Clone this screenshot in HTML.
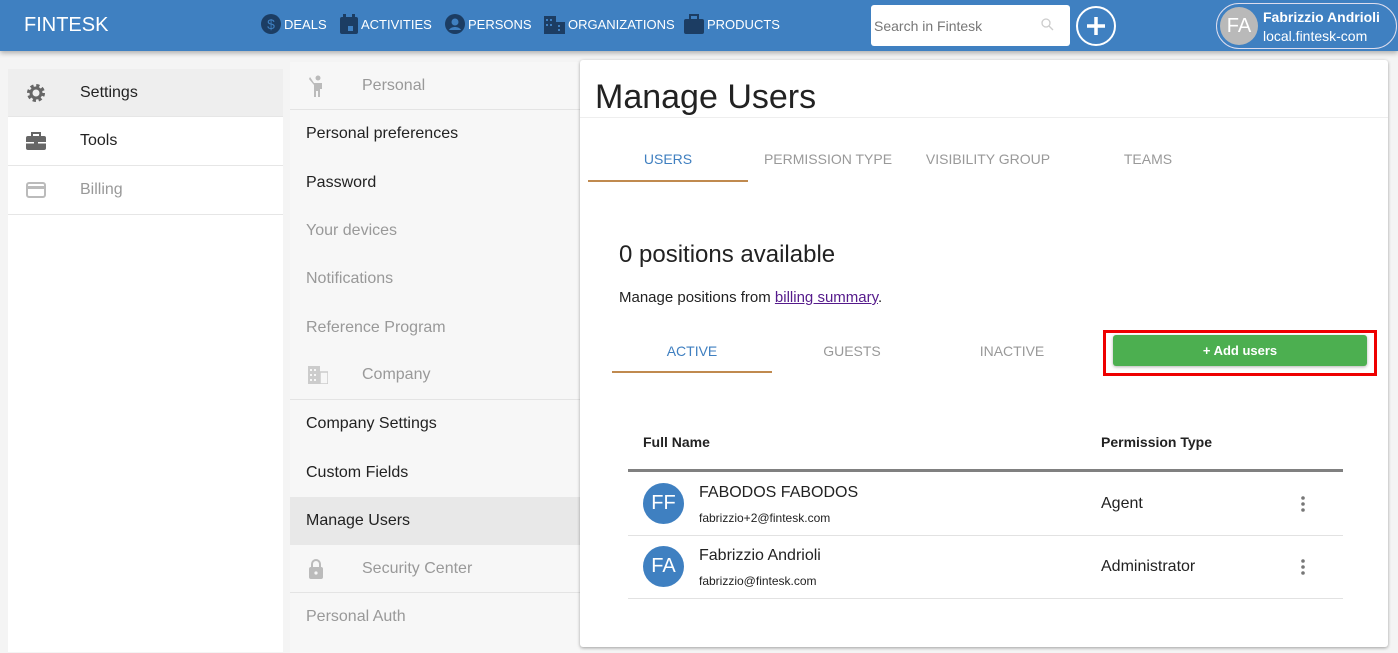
<!DOCTYPE html>
<html><head><meta charset="utf-8"><style>
*{box-sizing:border-box;margin:0;padding:0}
body{width:1398px;height:651px;overflow:hidden;background:#f4f4f4;font-family:"Liberation Sans",sans-serif;position:relative;color:#222}
.hdr{position:absolute;left:0;top:0;width:1398px;height:51px;background:#3f80c1;box-shadow:0 2px 5px rgba(0,0,0,.3);z-index:2}
.logo{position:absolute;left:24px;top:14px;color:#fff;font-size:20px}
.nav{position:absolute;top:14px;font-size:13px;color:#fff;display:flex;align-items:center}
.nav svg{margin-right:3px}
.search{position:absolute;left:871px;top:5px;width:199px;height:41px;background:#fff;border-radius:3px;font-size:14px;color:#777;padding:13px 3px}
.plus{position:absolute;left:1076px;top:6px;width:40px;height:40px;border:2px solid #fff;border-radius:50%}
.user{position:absolute;left:1216px;top:3px;width:181px;height:46px;border:1px solid #dde;border-radius:24px}
.av{position:absolute;border-radius:50%;color:#fff;text-align:center}
.left{position:absolute;left:8px;top:69px;width:275px;height:583px;background:#fff}
.li{height:49px;border-bottom:1px solid #e6e6e6;display:flex;align-items:center;font-size:16px;padding-left:72px;position:relative}
.li svg{position:absolute;left:18px}
.mid{position:absolute;left:290px;top:62px;width:290px;height:591px;background:#f7f7f7}
.mi{height:48.3px;display:flex;align-items:center;font-size:16px;padding-left:16px;color:#222;position:relative}
.mi.g{color:#999}
.mi.h{color:#999;padding-left:72px;border-bottom:1px solid #e4e4e4}
.mi.h svg{position:absolute;left:18px}
.card{position:absolute;left:580px;top:60px;width:808px;height:587px;background:#fff;border-radius:3px;box-shadow:0 1px 3px rgba(0,0,0,.35)}
.tab{position:absolute;font-size:14px;color:#999;text-align:center;width:160px}
</style></head><body>
<div class="hdr">
<div class="logo">FINTESK</div>
<div class="nav" style="left:261px"><svg width="20" height="20" viewBox="0 0 20 20"><circle cx="10" cy="10" r="10" fill="#1c3d63"/><text x="10" y="15" font-size="14" fill="#3f80c1" text-anchor="middle" font-family="Liberation Sans">$</text></svg>DEALS</div>
<div class="nav" style="left:340px"><svg width="18" height="20" viewBox="0 0 18 20"><rect x="0" y="3" width="18" height="17" rx="2" fill="#1c3d63"/><rect x="3" y="0" width="3" height="5" fill="#1c3d63"/><rect x="12" y="0" width="3" height="5" fill="#1c3d63"/><rect x="8" y="12" width="5" height="5" fill="#3f80c1"/></svg>ACTIVITIES</div>
<div class="nav" style="left:445px"><svg width="20" height="20" viewBox="0 0 20 20"><circle cx="10" cy="10" r="10" fill="#1c3d63"/><circle cx="10" cy="8" r="3.5" fill="#3f80c1"/><path d="M4 16c2-4 10-4 12 0" fill="#3f80c1"/></svg>PERSONS</div>
<div class="nav" style="left:544px"><svg width="21" height="20" viewBox="0 0 21 20"><rect x="0" y="2" width="12" height="18" fill="#1c3d63"/><rect x="12" y="8" width="9" height="12" fill="#1c3d63"/><g fill="#3f80c1"><rect x="2" y="5" width="2" height="2"/><rect x="6" y="5" width="2" height="2"/><rect x="2" y="10" width="2" height="2"/><rect x="6" y="10" width="2" height="2"/><rect x="14" y="11" width="2" height="2"/><rect x="14" y="15" width="2" height="2"/></g></svg>ORGANIZATIONS</div>
<div class="nav" style="left:684px"><svg width="20" height="20" viewBox="0 0 20 20"><rect x="0" y="5" width="20" height="15" rx="2" fill="#1c3d63"/><rect x="6" y="1" width="8" height="5" fill="none" stroke="#1c3d63" stroke-width="2"/></svg>PRODUCTS</div>
<div class="search">Search in Fintesk<svg style="position:absolute;right:16px;top:13px" width="13" height="13" viewBox="0 0 13 13"><circle cx="5" cy="5" r="4" fill="none" stroke="#ccc" stroke-width="1.3"/><path d="M8 8l4 4" stroke="#ccc" stroke-width="1.3"/></svg></div>
<div class="plus"><svg width="36" height="36" viewBox="0 0 36 36"><path d="M18 9v18M9 18h18" stroke="#fff" stroke-width="3.5"/></svg></div>
<div class="user"><div class="av" style="left:3px;top:3px;width:38px;height:38px;background:#b9b9b9;font-size:20px;line-height:38px">FA</div>
<div style="position:absolute;left:46px;top:5px;color:#fff;font-size:14px;font-weight:bold">Fabrizzio Andrioli</div>
<div style="position:absolute;left:46px;top:24px;color:#fff;font-size:14px">local.fintesk-com</div></div>
</div>

<div class="left">
<div class="li" style="background:#eee;height:48px"><svg width="20" height="20" viewBox="0 0 20 20"><circle cx="10" cy="10" r="7" fill="none" stroke="#666" stroke-width="4" stroke-dasharray="3 2.5"/><circle cx="10" cy="10" r="5" fill="none" stroke="#666" stroke-width="3"/></svg>Settings</div>
<div class="li"><svg width="20" height="18" viewBox="0 0 20 18"><rect x="0" y="4" width="20" height="14" rx="2" fill="#666"/><rect x="6" y="1" width="8" height="4" fill="none" stroke="#666" stroke-width="2"/><rect x="0" y="10" width="20" height="1.5" fill="#fff"/><rect x="8" y="8" width="4" height="5" fill="#666"/></svg>Tools</div>
<div class="li" style="color:#999"><svg width="20" height="16" viewBox="0 0 20 16"><rect x="1" y="1" width="18" height="14" rx="2" fill="none" stroke="#bbb" stroke-width="2"/><rect x="1" y="4" width="18" height="3" fill="#bbb"/></svg>Billing</div>
</div>

<div class="mid">
<div class="mi h"><svg width="18" height="22" viewBox="0 0 18 22"><circle cx="10" cy="3" r="2.5" fill="#bbb"/><path d="M2 2l4 6h8v6h-2v8h-2v-6h-2v6H6V10L1 4z" fill="#bbb"/></svg>Personal</div>
<div class="mi">Personal preferences</div>
<div class="mi">Password</div>
<div class="mi g">Your devices</div>
<div class="mi g">Notifications</div>
<div class="mi g">Reference Program</div>
<div class="mi h"><svg width="20" height="18" viewBox="0 0 20 18"><rect x="0" y="0" width="12" height="18" fill="#ccc"/><rect x="12" y="6" width="8" height="12" fill="none" stroke="#ccc" stroke-width="1.5"/><g fill="#f7f7f7"><rect x="2" y="3" width="2" height="2"/><rect x="6" y="3" width="2" height="2"/><rect x="2" y="8" width="2" height="2"/><rect x="6" y="8" width="2" height="2"/><rect x="2" y="13" width="2" height="2"/><rect x="6" y="13" width="2" height="2"/></g></svg>Company</div>
<div class="mi">Company Settings</div>
<div class="mi">Custom Fields</div>
<div class="mi" style="background:#e8e8e8">Manage Users</div>
<div class="mi h"><svg width="16" height="20" viewBox="0 0 16 20"><path d="M4 8V5a4 4 0 0 1 8 0v3" fill="none" stroke="#bbb" stroke-width="2"/><rect x="1" y="8" width="14" height="12" rx="2" fill="#bbb"/><circle cx="8" cy="14" r="1.6" fill="#f7f7f7"/></svg>Security Center</div>
<div class="mi g">Personal Auth</div>
</div>

<div class="card">
<div style="position:absolute;left:15px;top:18px;font-size:34px;color:#222">Manage Users</div>
<div style="position:absolute;left:0;top:57px;width:808px;border-top:1px solid #eee"></div>
<div class="tab" style="left:8px;top:91px;color:#3f7fc0">USERS</div>
<div style="position:absolute;left:8px;top:120px;width:160px;height:2px;background:#c08a4f"></div>
<div class="tab" style="left:168px;top:91px">PERMISSION TYPE</div>
<div class="tab" style="left:328px;top:91px">VISIBILITY GROUP</div>
<div class="tab" style="left:488px;top:91px">TEAMS</div>
<div style="position:absolute;left:39px;top:181px;font-size:24px">0 positions available</div>
<div style="position:absolute;left:39px;top:229px;font-size:15px">Manage positions from <span style="color:#551a8b;text-decoration:underline">billing summary</span>.</div>
<div class="tab" style="left:32px;top:283px;color:#3f7fc0">ACTIVE</div>
<div style="position:absolute;left:32px;top:311px;width:160px;height:2px;background:#c08a4f"></div>
<div class="tab" style="left:192px;top:283px">GUESTS</div>
<div class="tab" style="left:352px;top:283px">INACTIVE</div>
<div style="position:absolute;left:523px;top:270px;width:274px;height:46px;border:3px solid #e00"></div>
<div style="position:absolute;left:533px;top:275px;width:254px;height:31px;background:#4caf50;border-radius:3px;box-shadow:0 1px 3px rgba(0,0,0,.3);color:#fff;font-size:13px;font-weight:bold;text-align:center;line-height:31px">+ Add users</div>
<div style="position:absolute;left:63px;top:374px;font-size:14px;font-weight:bold">Full Name</div>
<div style="position:absolute;left:521px;top:374px;font-size:14px;font-weight:bold">Permission Type</div>
<div style="position:absolute;left:48px;top:409px;width:715px;height:3px;background:#808080"></div>
<div class="av" style="left:63px;top:423px;width:41px;height:41px;background:#3f80c1;font-size:20px;line-height:41px">FF</div>
<div style="position:absolute;left:119px;top:424px;font-size:16px">FABODOS FABODOS</div>
<div style="position:absolute;left:119px;top:451px;font-size:12px">fabrizzio+2@fintesk.com</div>
<div style="position:absolute;left:521px;top:435px;font-size:16px">Agent</div>
<div style="position:absolute;left:48px;top:475px;width:715px;border-top:1px solid #e2e2e2"></div>
<div class="av" style="left:63px;top:486px;width:41px;height:41px;background:#3f80c1;font-size:20px;line-height:41px">FA</div>
<div style="position:absolute;left:119px;top:487px;font-size:16px">Fabrizzio Andrioli</div>
<div style="position:absolute;left:119px;top:514px;font-size:12px">fabrizzio@fintesk.com</div>
<div style="position:absolute;left:521px;top:498px;font-size:16px">Administrator</div>
<div style="position:absolute;left:48px;top:538px;width:715px;border-top:1px solid #e2e2e2"></div>
<svg style="position:absolute;left:720px;top:435px" width="6" height="18" viewBox="0 0 6 18"><g fill="#777"><circle cx="3" cy="3" r="1.8"/><circle cx="3" cy="9" r="1.8"/><circle cx="3" cy="15" r="1.8"/></g></svg>
<svg style="position:absolute;left:720px;top:498px" width="6" height="18" viewBox="0 0 6 18"><g fill="#777"><circle cx="3" cy="3" r="1.8"/><circle cx="3" cy="9" r="1.8"/><circle cx="3" cy="15" r="1.8"/></g></svg>
</div>
</body></html>
